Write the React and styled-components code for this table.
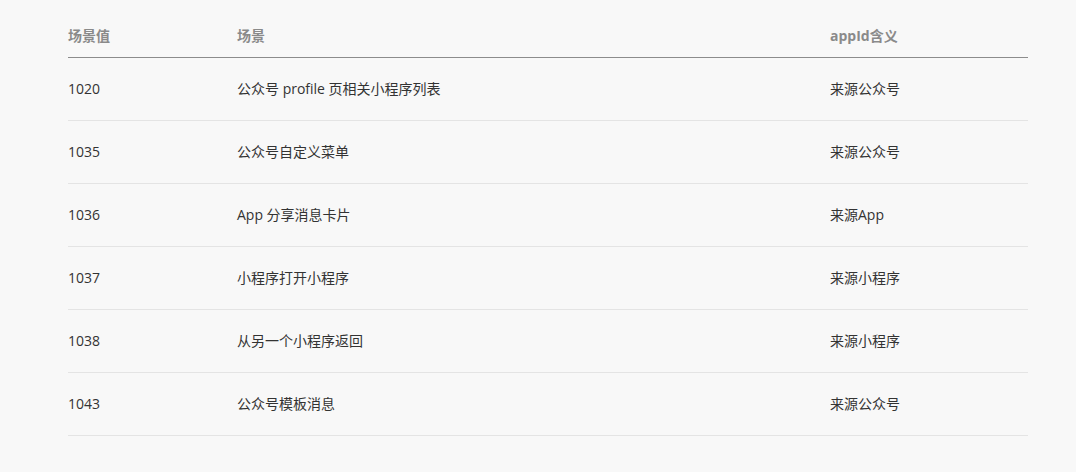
import React from "react";
import styled, { createGlobalStyle } from "styled-components";

const Global = createGlobalStyle`
  html, body { margin: 0; padding: 0; background: #f8f8f8; }
  body {
    font-family: "Segoe UI", "Open Sans", "Noto Sans CJK SC", sans-serif;
    color: #333;
  }
`;

const Page = styled.div`
  padding: 15px 48px 0 68px;
  min-height: 472px;
  box-sizing: border-box;
`;

const Table = styled.table`
  width: 960px;
  border-collapse: collapse;
  table-layout: fixed;
  font-size: 14px;
`;

const Th = styled.th`
  text-align: left;
  font-weight: bold;
  color: #8a8a8a;
  height: 40px;
  padding: 0 0 2px 0;
  vertical-align: middle;
  border-bottom: 1px solid #8c8c8c;
  width: ${(p) => p.$w}px;
`;

const Td = styled.td`
  padding: 0 0 2px 0;
  height: 60px;
  vertical-align: middle;
  border-bottom: 1px solid #e4e4e4;
  color: #333;
`;

const rows = [
  ["1020", "公众号 profile 页相关小程序列表", "来源公众号"],
  ["1035", "公众号自定义菜单", "来源公众号"],
  ["1036", "App 分享消息卡片", "来源App"],
  ["1037", "小程序打开小程序", "来源小程序"],
  ["1038", "从另一个小程序返回", "来源小程序"],
  ["1043", "公众号模板消息", "来源公众号"],
];

export default function App() {
  return (
    <>
      <Global />
      <Page>
        <Table>
          <thead>
            <tr>
              <Th $w={169}>场景值</Th>
              <Th $w={593}>场景</Th>
              <Th $w={198}>appId含义</Th>
            </tr>
          </thead>
          <tbody>
            {rows.map((r) => (
              <tr key={r[0]}>
                <Td>{r[0]}</Td>
                <Td>{r[1]}</Td>
                <Td>{r[2]}</Td>
              </tr>
            ))}
          </tbody>
        </Table>
      </Page>
    </>
  );
}
